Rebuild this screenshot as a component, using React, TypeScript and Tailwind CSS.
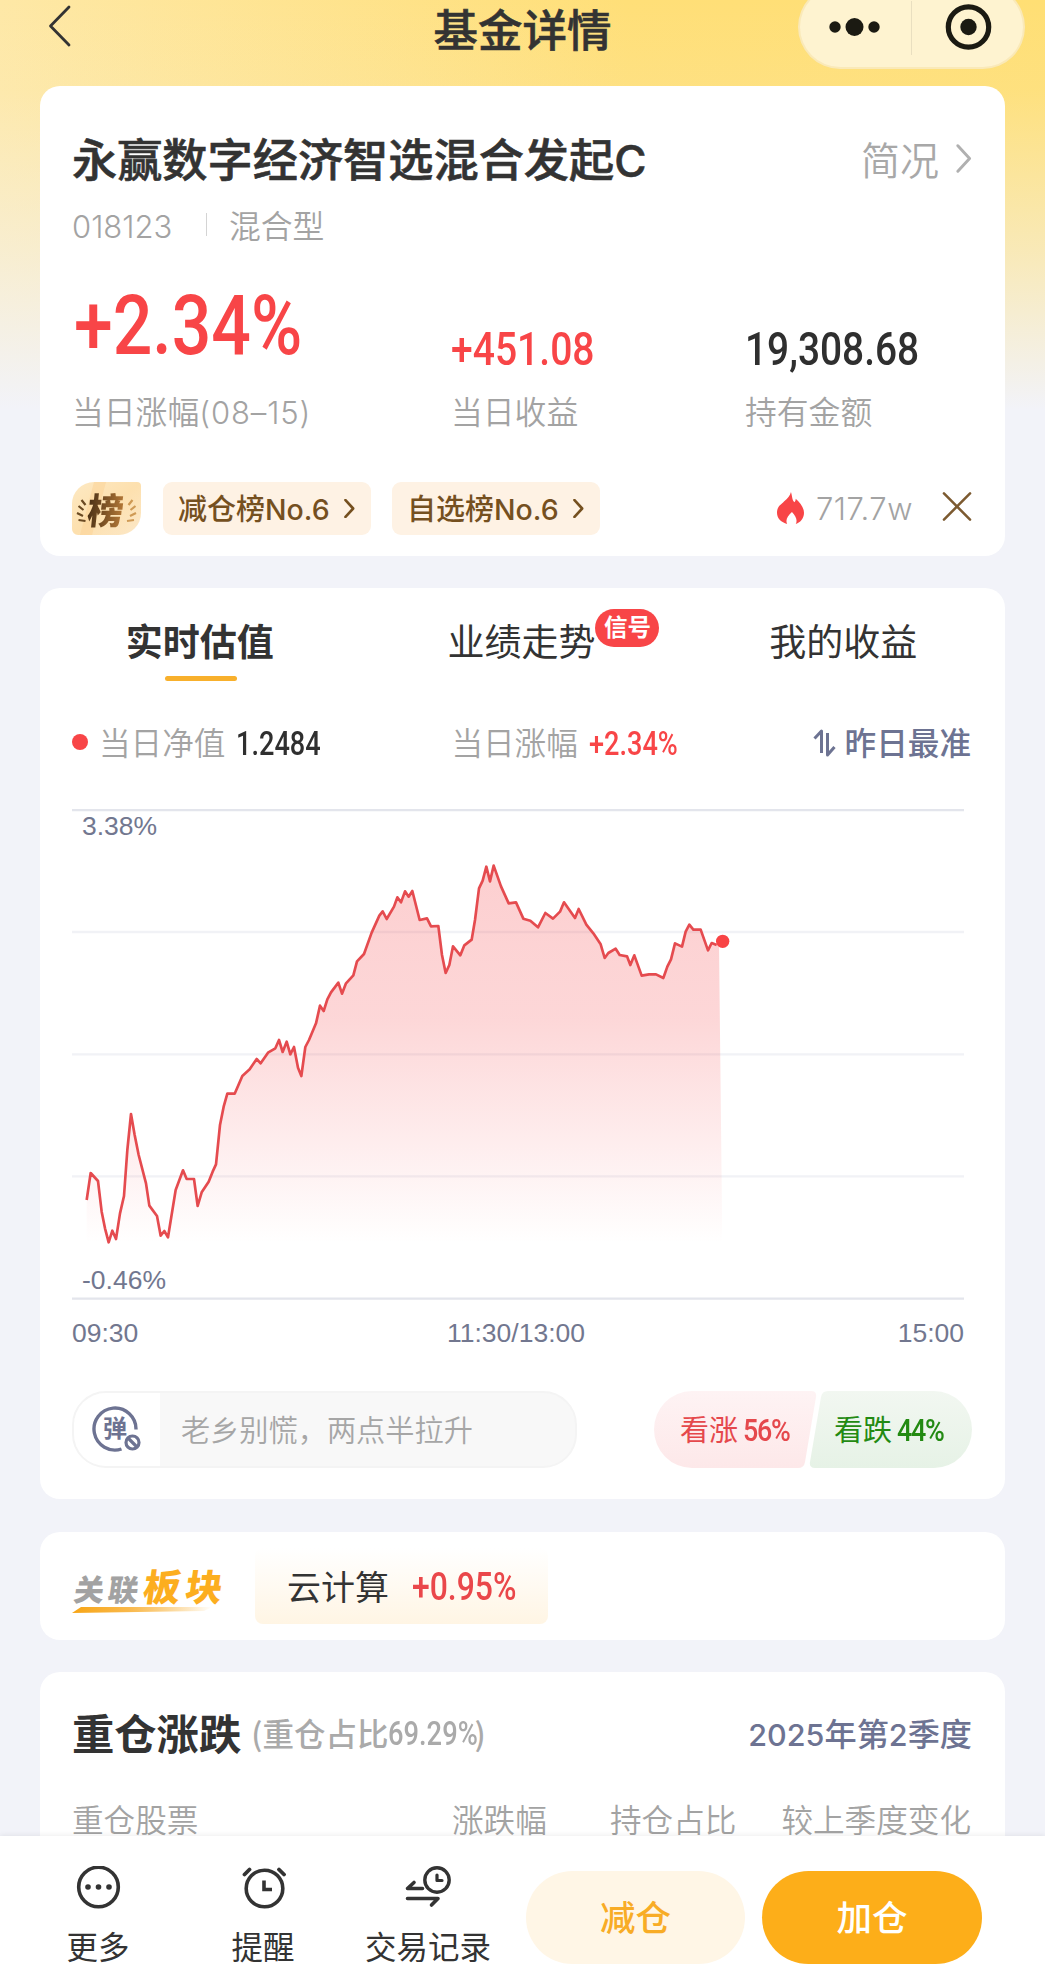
import type { ReactNode } from "react";
import clsx from "clsx";

const CJK = "font-['Noto_Sans_CJK_SC',sans-serif]";

const TABS = [
  { label: "实时估值", active: true },
  { label: "业绩走势", badge: "信号" },
  { label: "我的收益" },
];

// intraday estimate, three units per pixel
const POINTS: [number, number][] = [
  [80, 1080], [92, 999], [114, 1023], [125, 1115], [135, 1165], [146, 1207], [157, 1172], [168, 1197],
  [180, 1120], [192, 1068], [202, 930], [213, 822], [224, 885], [236, 945], [258, 1030], [268, 1097],
  [291, 1128], [302, 1187], [313, 1173], [324, 1192], [347, 1050], [369, 991], [380, 1017], [402, 1017],
  [413, 1098], [425, 1057], [446, 1025], [458, 995], [468, 973], [480, 855], [491, 800], [502, 761],
  [524, 761], [547, 708], [569, 688], [590, 657], [602, 670], [624, 638], [646, 625], [657, 600],
  [668, 636], [680, 605], [691, 643], [702, 621], [714, 683], [724, 708], [736, 621], [747, 600],
  [768, 550], [780, 497], [791, 513], [802, 478], [813, 457], [835, 428], [846, 461], [858, 430],
  [880, 406], [891, 364], [912, 342], [935, 278], [958, 227], [968, 214], [980, 237], [1002, 200],
  [1012, 172], [1023, 187], [1035, 154], [1046, 170], [1057, 153], [1079, 240], [1101, 235], [1113, 259],
  [1135, 258], [1146, 345], [1157, 399], [1168, 375], [1179, 319], [1201, 346], [1213, 316], [1235, 299],
  [1245, 240], [1257, 145], [1268, 122], [1279, 80], [1290, 124], [1301, 77], [1323, 139], [1346, 190],
  [1368, 187], [1390, 236], [1411, 242], [1434, 262], [1456, 219], [1479, 236], [1500, 215], [1512, 187],
  [1545, 234], [1556, 207], [1579, 254], [1600, 280], [1622, 313], [1634, 354], [1645, 339], [1667, 326],
  [1679, 345], [1701, 349], [1711, 375], [1723, 346], [1745, 407], [1767, 403], [1788, 403], [1810, 414],
  [1822, 380], [1833, 358], [1845, 310], [1866, 320], [1877, 275], [1888, 254], [1900, 269], [1922, 269],
  [1944, 331], [1955, 309], [1970, 315],
];

const LINE = POINTS.map(([x, y]) => `${x},${y}`).join(" ");

// digits are squeezed to get the narrow DIN look
function Num({ children, className }: { children: ReactNode; className?: string }) {
  return (
    <span className={clsx("block shrink-0 font-['Roboto',sans-serif] font-medium leading-none whitespace-nowrap", className)}>
      <span className="inline-block origin-left scale-x-[0.84]">{children}</span>
    </span>
  );
}

function Latin({ children, className }: { children: ReactNode; className?: string }) {
  return <span className={clsx("font-['Inter',sans-serif] leading-none", className)}>{children}</span>;
}

function Chevron({ className, width = 2.6 }: { className?: string; width?: number }) {
  return (
    <svg viewBox="0 0 14 26" fill="none" stroke="currentColor" className={className}>
      <path d="M1.500 1.500 12 13 1.500 24.500" strokeWidth={width} strokeLinecap="round" strokeLinejoin="round" />
    </svg>
  );
}

function Header() {
  return (
    <header className="relative flex h-[86px] shrink-0 justify-center">
      <svg viewBox="0 0 24 44" fill="none" className="absolute left-[48px] top-1 h-11 w-6">
        <path d="M21 3 2.500 22 21 41" stroke="#333" strokeWidth="2.800" strokeLinecap="round" strokeLinejoin="round" />
      </svg>
      <h1 className="h-[56px] text-[44.500px] font-medium leading-[56px] text-[#333] [-webkit-text-stroke:0.6px_#333]">基金详情</h1>
      <div className="absolute -top-[15px] right-[20px] flex h-[84px] w-[227px] items-center rounded-full border-2 border-[#f6e3a8]/60 bg-[#fef3d0]">
        <svg viewBox="0 0 227 84" className="absolute -left-[3px] -top-0.5 h-[84px] w-[227px]">
          <g fill="#1b1a12">
            <circle cx="38" cy="42" r="5.700" />
            <circle cx="57.500" cy="42" r="9" />
            <circle cx="77" cy="42" r="5.700" />
            <circle cx="171.500" cy="42" r="8.200" />
          </g>
          <circle cx="171.500" cy="42" r="20.200" fill="none" stroke="#1b1a12" strokeWidth="5.200" />
          <path d="M114.500 16v54" stroke="#e9dfc0" strokeWidth="1" />
        </svg>
      </div>
    </header>
  );
}

function RankTag({ name, rank }: { name: string; rank: string }) {
  return (
    <div className="flex h-[53px] w-[208px] items-center rounded-[9px] bg-[#fef2e4] pl-[15px] text-[29px] text-[#75501f]">
      <span className="flex items-baseline pb-0.5 font-medium leading-[49px]">
        {name}
        <Latin className="text-[28.500px]">{rank}</Latin>
      </span>
      <Chevron width={3.600} className="ml-auto mr-[15px] h-[19px] w-[13px]" />
    </div>
  );
}

function SummaryCard() {
  return (
    <section className="h-[470px] shrink-0 rounded-[20px] bg-white px-8 pt-[42px]">
      <div className="flex h-[60px] items-center">
        <h2 className="flex items-baseline text-[45.200px] font-medium leading-[62px] text-[#333] [-webkit-text-stroke:0.6px_#333]">
          永赢数字经济智选混合发起<Latin className="text-[44px]">C</Latin>
        </h2>
        <span className="ml-auto text-[39px] font-[350] leading-[58px] text-[#a8a8a8]">简况</span>
        <Chevron className="ml-[17px] mr-px h-[29px] w-[16px] text-[#b0b0b0]" />
      </div>
      <div className="mt-4 flex h-10 items-baseline text-[31.800px] font-[350] leading-10 text-[#a3a3a3]">
        <Latin className="w-[102px] text-[31px] font-light">018123</Latin>
        <i className="ml-[32px] h-[23px] w-px self-center bg-[#d4d4d4]" />
        <span className="ml-[22px]">混合型</span>
      </div>
      <div className="mt-10 grid grid-cols-[379px_294px_1fr]">
        <div>
          <div className="h-[90px] pl-0.5">
            <Num className="text-[83px] leading-[84px] text-[#f84547]">+2.34%</Num>
          </div>
          <p className="mt-4 flex h-10 items-baseline text-[31.800px] font-[350] leading-10 text-[#a3a3a3]">
            当日涨幅<Latin className="text-[31px] font-light tracking-[0.9px]">(08–15)</Latin>
          </p>
        </div>
        <div>
          <div className="flex h-[90px] items-end pb-0.5">
            <Num className="text-[46.500px] leading-[48px] text-[#f84547]">+451.08</Num>
          </div>
          <p className="mt-4 text-[31.800px] font-[350] leading-10 text-[#a3a3a3]">当日收益</p>
        </div>
        <div>
          <div className="flex h-[90px] items-end pb-0.5">
            <Num className="text-[46.300px] leading-[48px] text-[#2f2f2f]">19,308.68</Num>
          </div>
          <p className="mt-4 text-[31.800px] font-[350] leading-10 text-[#a3a3a3]">持有金额</p>
        </div>
      </div>
      <div className="mt-[52px] flex h-[53px] items-center">
        <div className="relative grid h-[53px] w-[69px] place-items-center overflow-hidden rounded-bl-[6px] rounded-br-[22px] rounded-tl-[22px] rounded-tr-[4px] bg-linear-to-br from-[#fde9c3] via-[#fde0ae] to-[#fce8c8]">
          <svg viewBox="0 0 69 53" fill="none" className="absolute inset-0 h-[53px] w-[69px]">
            <path d="M22 0h12L20 53H8z" fill="#fbd397" opacity=".55" />
            <g stroke="#6b4a22" strokeWidth="2.200">
              <path d="m9.500 18 4 5M6.500 24l5 4M5 31l6 3M6.500 38l7 1" />
            </g>
            <g stroke="#cf9a55" strokeWidth="2.200">
              <path d="m60.500 18-4 5M63.500 24l-5 4M64 31l-6 3M62 38l-7 1" />
            </g>
          </svg>
          <span className="relative -skew-x-6 bg-linear-to-r from-[#4d3216] to-[#b67a38] bg-clip-text text-[36px] font-black leading-[49px] text-transparent">榜</span>
        </div>
        <div className="ml-[22px]">
          <RankTag name="减仓榜" rank="No.6" />
        </div>
        <div className="ml-[21px]">
          <RankTag name="自选榜" rank="No.6" />
        </div>
        <svg viewBox="0 0 28 34" preserveAspectRatio="none" className="ml-auto h-[33px] w-[27px]">
          <path
            d="M14.500 0c1.500 5 1 8 3.500 10.500 1-.8 1.400-2 1.400-3.500C24 11 28 16 28 21.500 28 27 24.500 31.500 19.500 33c2-4.500 0-8-4-12.500-4.500 4-7 8-5 12.500C4.500 31.500 0 27.500 0 21.500 0 15 3.500 13.500 7.500 9.500 11.500 6 13.500 4 14.500 0z"
            fill="#f84547"
          />
        </svg>
        <Latin className="ml-[12px] w-[100px] text-[31px] font-light tracking-[0.5px] text-[#a3a3a3]">717.7w</Latin>
        <svg viewBox="0 0 30 30" fill="none" stroke="#7c5a30" className="mb-[5px] ml-[26px] mr-px h-[29px] w-[30px]">
          <path d="M1.500 1.500 28.500 28.500M28.500 1.500 1.500 28.500" strokeWidth="2.600" strokeLinecap="round" />
        </svg>
      </div>
    </section>
  );
}

function Chart() {
  return (
    <div className="relative mt-[48px] h-[491px] w-[893px] font-['Liberation_Sans',sans-serif] text-[26.500px] leading-none text-[#72778f]">
      <svg viewBox="36 -93 2679 1473" className="h-[491px] w-[893px]" fill="none">
        <defs>
          <linearGradient id="area" gradientUnits="userSpaceOnUse" x1="0" y1="77" x2="0" y2="1210">
            <stop offset="0" stopColor="#f5474b" stopOpacity=".26" />
            <stop offset=".4" stopColor="#f5474b" stopOpacity=".22" />
            <stop offset="1" stopColor="#f5474b" stopOpacity="0" />
          </linearGradient>
        </defs>
        <path d="M36 276H2712M36 643H2712M36 1009H2712" stroke="#f1f2f6" strokeWidth="7" />
        <path d="M36 -90H2712M36 1376H2712" stroke="#e3e5ec" strokeWidth="7" />
        <polygon points={`80,1210 ${LINE} 1977,310 1987,1210`} fill="url(#area)" />
        <polyline points={LINE} stroke="#e54b4f" strokeWidth="8" strokeLinejoin="round" />
        <circle cx="1988" cy="304" r="20" fill="#f84345" />
      </svg>
      <span className="absolute left-[10px] top-[4px]">3.38%</span>
      <span className="absolute bottom-[7px] left-[10px]">-0.46%</span>
    </div>
  );
}

function BarrageRow() {
  return (
    <div className="mt-[42px] flex h-[77px]">
      <div className="flex w-[505px] overflow-hidden rounded-[34px] border-2 border-[#f4f4f4] bg-[#f8f8f8]">
        <div className="relative w-[86px] bg-white">
          <svg viewBox="0 0 50 46" fill="none" stroke="#6d7392" className="absolute left-[18px] top-[13px] h-[46px] w-[50px]">
            <path d="M44 23.500A21 21 0 1 0 29.500 43" strokeWidth="3.400" />
            <circle cx="40.500" cy="36.500" r="6.500" strokeWidth="3.200" />
            <path d="m36 32 9 9" strokeWidth="3.200" />
          </svg>
          <span className="absolute left-[29px] top-[20px] text-[24px] font-bold leading-7 text-[#6d7392]">弹</span>
        </div>
        <span className="pl-[21px] text-[29.200px] font-[350] leading-[71px] text-[#a6a6a6]">老乡别慌，两点半拉升</span>
      </div>
      <div className="relative ml-auto mr-px flex w-[318px] text-[29px]">
        <svg viewBox="0 0 318 77" className="absolute inset-0 h-[77px] w-[318px]">
          <defs>
            <linearGradient id="up" x1="0" y1="0" x2="0" y2="1">
              <stop offset="0" stopColor="#fef3f4" />
              <stop offset="1" stopColor="#fde8e9" />
            </linearGradient>
            <linearGradient id="down" x1="0" y1="0" x2="0" y2="1">
              <stop offset="0" stopColor="#f2f7f1" />
              <stop offset="1" stopColor="#e6f2e6" />
            </linearGradient>
          </defs>
          <path d="M38 0H157q6 0 5 6L151 71q-1 6-7 6H38A38 38.500 0 0 1 38 0z" fill="url(#up)" />
          <path d="M174 0H280A38 38.500 0 0 1 280 77H161q-6 0-5-6L167 6q1-6 7-6z" fill="url(#down)" />
        </svg>
        <div className="relative flex h-[75px] items-center pl-[26px] text-[#e5484c]">
          <span className="leading-[73px]">看涨</span>
          <Num className="ml-[5px] mt-[2px] w-[51px] text-[32px] font-bold tracking-[-1.500px]">56%</Num>
        </div>
        <div className="relative ml-[40px] flex h-[75px] items-center text-[#238a12]">
          <span className="leading-[73px]">看跌</span>
          <Num className="ml-[5px] mt-[2px] w-[51px] text-[32px] font-bold tracking-[-1.500px]">44%</Num>
        </div>
      </div>
    </div>
  );
}

function TrendCard() {
  return (
    <section className="mt-8 h-[911px] shrink-0 rounded-[20px] bg-white pt-[22px]">
      <div className="grid grid-cols-3">
        {TABS.map((t) => (
          <div key={t.label} className={clsx("flex h-[60px] justify-center text-[37px] leading-[60px] text-[#333]", t.active && "font-bold")}>
            <span className="relative -left-px">
              {t.label}
              {t.active && <i className="absolute left-[calc(50%+1px)] top-[66px] h-[5px] w-[72px] -translate-x-1/2 rounded-full bg-[#f8b02c]" />}
              {t.badge && (
                <b className="absolute -top-px left-full h-[38px] w-[64px] rounded-full bg-[#f84547] text-center text-[23.500px] font-bold leading-[35px] text-white">
                  {t.badge}
                </b>
              )}
            </span>
          </div>
        ))}
      </div>
      <div className="px-8">
        <div className="mt-[51px] flex h-10 items-center text-[31.600px] font-[350] leading-10 text-[#a3a3a3]">
          <i className="mt-0.5 h-4 w-4 rounded-full bg-[#f84547]" />
          <span className="ml-[11px] leading-[37px]">当日净值</span>
          <Num className="ml-[11px] mt-[6px] w-[90px] text-[32.300px] text-[#2f2f2f]">1.2484</Num>
          <span className="ml-[125px] leading-[37px]">当日涨幅</span>
          <Num className="ml-[11px] mt-[6px] w-[90px] text-[32.300px] text-[#f84547]">+2.34%</Num>
          <svg viewBox="0 0 23 30" fill="none" stroke="#6d7392" className="ml-auto mt-1 h-[30px] w-[23px]">
            <path d="M1.500 10.500 8.500 3v22M14.500 5v22l7-8" strokeWidth="3" strokeLinejoin="round" />
          </svg>
          <span className="ml-[9px] mr-[2px] font-medium leading-[37px] text-[#6d7392]">昨日最准</span>
        </div>
        <Chart />
        <div className="mt-[17px] flex h-8 w-[892px] justify-between font-['Liberation_Sans',sans-serif] text-[26.500px] leading-8 text-[#72778f]">
          <span>09:30</span>
          <span className="-ml-1">11:30/13:00</span>
          <span>15:00</span>
        </div>
        <BarrageRow />
      </div>
    </section>
  );
}

function SectorCard() {
  return (
    <section className="mt-[33px] flex h-[108px] shrink-0 rounded-[20px] bg-white px-8">
      <div className="relative mt-[34px] h-[50px] w-[152px] whitespace-nowrap">
        <div className="flex origin-bottom-left -skew-x-8 items-baseline font-black leading-[38px]">
          <span className="text-[30px] tracking-[4px] text-[#a2a2a2]">关联</span>
          <span className="ml-px text-[37px] tracking-[5px] text-[#fcae1f]">板块</span>
        </div>
        <svg viewBox="0 0 140 6" className="absolute left-0 top-[41px] h-[6px] w-[140px]">
          <defs>
            <linearGradient id="swoosh">
              <stop offset="0" stopColor="#f7a516" />
              <stop offset=".4" stopColor="#f9b84a" />
              <stop offset="1" stopColor="#f7a516" stopOpacity="0" />
            </linearGradient>
          </defs>
          <path d="M9 0H140L132 4 0 6z" fill="url(#swoosh)" />
        </svg>
      </div>
      <div className="ml-[31px] mt-4 flex h-[76px] w-[293px] items-center rounded-[8px] bg-linear-to-b from-white to-[#fff5e4] pl-8 text-[34px] text-[#333]">
        <span className="leading-[70px]">云计算</span>
        <Num className="ml-[23px] mt-[2px] text-[38px] text-[#ea474a]">+0.95%</Num>
      </div>
    </section>
  );
}

function HoldingsCard() {
  return (
    <section className="mt-8 h-[164px] shrink-0 rounded-t-[20px] bg-white px-8 pt-[32px]">
      <div className="flex h-[56px] items-center leading-[56px]">
        <h3 className="text-[42.300px] font-bold text-[#333]">重仓涨跌</h3>
        <span className="ml-[10px] flex items-center text-[31.500px] font-medium text-[#aaa]">
          (重仓占比
          <Num className="mt-[5px] w-[86px] text-[32.500px]">69.29%</Num>)
        </span>
        <span className="ml-auto mr-px flex items-baseline text-[32.200px] font-medium text-[#6d7392]">
          <Latin className="text-[30.500px]">2025</Latin>年第<Latin className="text-[30.500px]">2</Latin>季度
        </span>
      </div>
      <div className="mt-[38px] flex h-[38px] text-[31.600px] font-[350] leading-10 text-[#a3a3a3]">
        <span className="w-[380px]">重仓股票</span>
        <span className="w-[158px]">涨跌幅</span>
        <span>持仓占比</span>
        <span className="ml-auto mr-[2px]">较上季度变化</span>
      </div>
    </section>
  );
}

function ActionBar() {
  return (
    <footer className="relative flex h-[150px] shrink-0 bg-white text-[31.500px] text-[#333] shadow-[0_-1px_5px_rgba(0,0,0,0.07)]">
      <div className="ml-[58px] flex w-20 flex-col items-center pt-[30px]">
        <svg viewBox="0 0 46 46" className="h-[46px] w-[46px]" fill="none" stroke="#333">
          <circle cx="23.500" cy="21" r="19.800" strokeWidth="3.600" />
          <g fill="#333" stroke="none">
            <circle cx="13" cy="21" r="2.800" />
            <circle cx="23.500" cy="21" r="2.800" />
            <circle cx="34" cy="21" r="2.800" />
          </g>
        </svg>
        <span className="mt-[13px] leading-10">更多</span>
      </div>
      <div className="ml-[85px] flex w-20 flex-col items-center pt-[30px]">
        <svg viewBox="0 0 46 46" className="h-[46px] w-[46px]" fill="none" stroke="#333" strokeLinecap="round">
          <circle cx="24.500" cy="22.500" r="18.300" strokeWidth="3.600" />
          <path d="M24 14.500v9h8" strokeWidth="3.600" strokeLinecap="butt" />
          <path d="m4.500 8.500 5-5M44 8.500l-5-5" strokeWidth="3.800" />
        </svg>
        <span className="mt-[13px] leading-10">提醒</span>
      </div>
      <div className="ml-[57px] flex w-[136px] flex-col items-center pt-[30px]">
        <svg viewBox="0 0 46 46" className="h-[46px] w-[46px]" fill="none" stroke="#333" strokeLinecap="round" strokeLinejoin="round">
          <circle cx="32" cy="14" r="12.200" strokeWidth="3.400" />
          <path d="M32 9v5.500h5" strokeWidth="3.200" />
          <path d="M17.500 22.500H2.500l6.500-6M2.500 32.500h30.500l-6.500 6.500" strokeWidth="3.600" />
        </svg>
        <span className="mt-[13px] leading-10">交易记录</span>
      </div>
      <button className="ml-[30px] mt-[35px] h-[93px] w-[219px] rounded-full bg-[#fff6e6] pb-[3px] text-[35.500px] font-medium text-[#f8ac26]">减仓</button>
      <button className="ml-[17px] mt-[35px] h-[93px] w-[220px] rounded-full bg-[#fdae19] pb-[3px] text-[35.500px] font-medium text-white">加仓</button>
    </footer>
  );
}

export default function App() {
  return (
    <div className={clsx("flex h-[1986px] w-[1045px] flex-col overflow-hidden bg-[#f2f3f9]", CJK)}>
      <main className="flex h-[1836px] shrink-0 flex-col bg-[linear-gradient(180deg,rgba(242,243,249,0)_0px,rgba(242,243,249,0.08)_90px,rgba(242,243,249,0.5)_250px,#f2f3f9_410px),linear-gradient(90deg,#fee8a6,#ffdf78_60%,#ffdf74)]">
        <Header />
        <div className="flex flex-col px-10">
          <SummaryCard />
          <TrendCard />
          <SectorCard />
          <HoldingsCard />
        </div>
      </main>
      <ActionBar />
    </div>
  );
}
